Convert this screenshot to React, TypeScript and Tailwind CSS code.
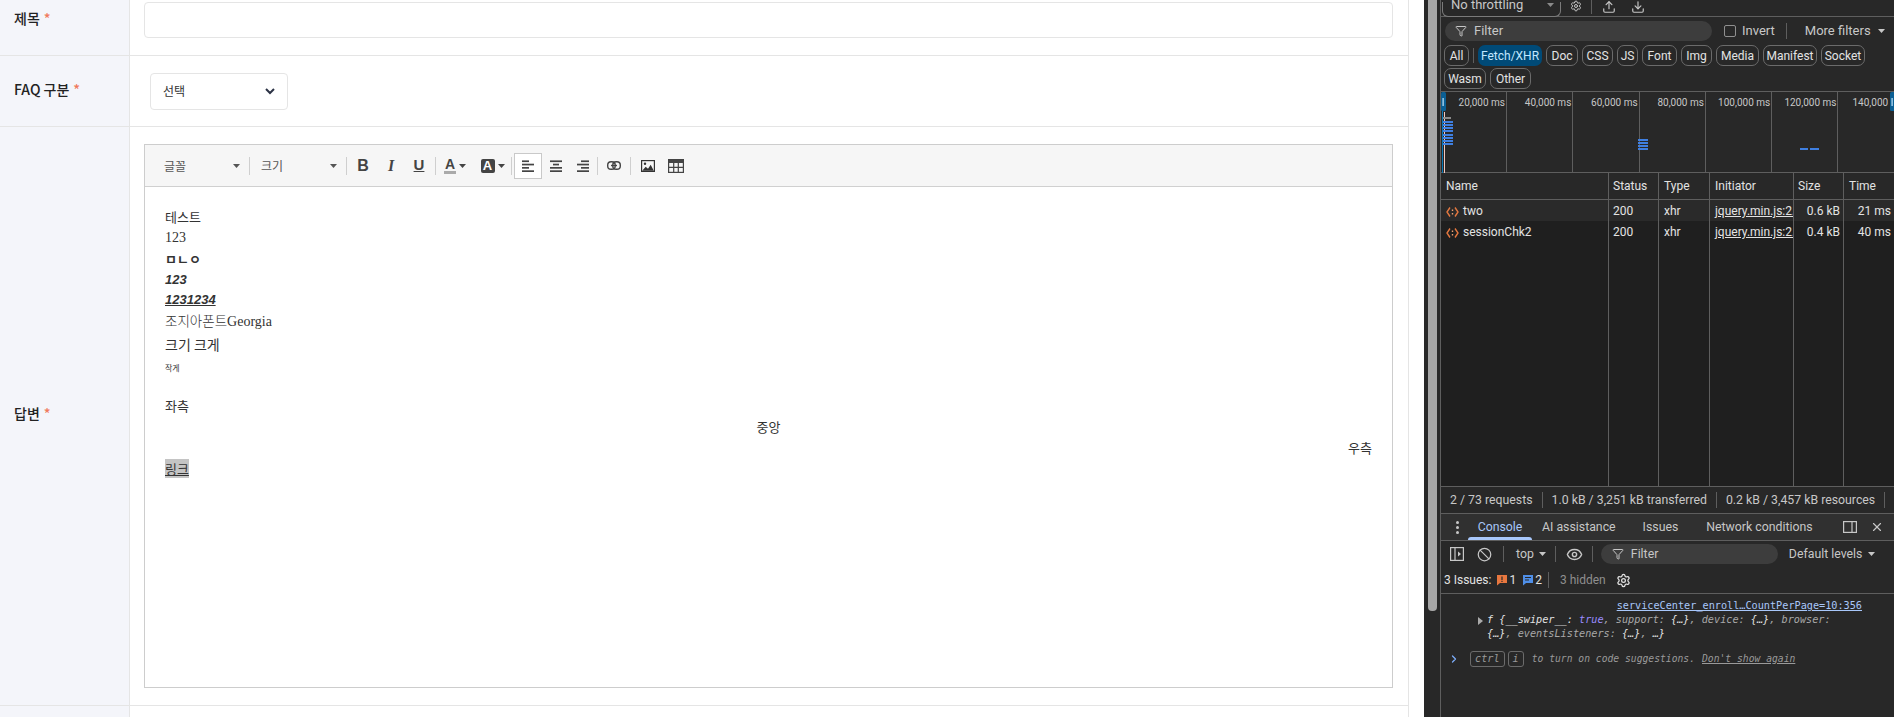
import { Eye, Ban, X, ChevronRight, Settings, Upload, Download, Filter } from 'lucide-react';

const KR = 'font-["Noto_Sans_CJK_KR","Noto_Sans",sans-serif]';

const Required = () => <span className="ml-1 text-[#f0795b]">*</span>;

const Caret = ({ className = '' }: { className?: string }) => (
  <svg width="7" height="4" viewBox="0 0 7 4" className={className}><path d="M0 0h7L3.5 4z" fill="currentColor" /></svg>
);

const Sep = () => <span className="h-[18px] w-px shrink-0 bg-[#cfcfcf]" />;

const AlignIcon = ({ kind }: { kind: 'left' | 'center' | 'right' }) => {
  const rows = kind === 'left'
    ? [[0, 7], [0, 12], [0, 7], [0, 12]]
    : kind === 'center'
      ? [[0, 12], [3, 6], [0, 12], [0, 12]]
      : [[4, 8], [0, 12], [4, 8], [0, 12]];
  return (
    <svg width="12" height="12" viewBox="0 0 12 12" fill="#444">
      {rows.map(([x, w], i) => <rect key={i} x={x} y={i * 3.3 + 0.4} width={w} height="1.7" />)}
    </svg>
  );
};

function Toolbar() {
  return (
    <div className="flex h-[42px] shrink-0 items-center border-b border-[#d0d0d0] bg-[#f6f6f6] pl-[4px] text-[#333]">
      <div className={`flex w-[100px] shrink-0 items-center justify-between pl-[15px] pr-[9px] text-[12px] text-[#555] ${KR}`}>
        <span>글꼴</span><Caret />
      </div>
      <Sep />
      <div className={`flex w-[96px] shrink-0 items-center justify-between pl-[11px] pr-[9px] text-[12px] text-[#555] ${KR}`}>
        <span>크기</span><Caret />
      </div>
      <Sep />
      <div className='ml-[2px] flex w-[86px] shrink-0 items-center font-["Liberation_Sans",sans-serif] text-[16px] text-[#444]'>
        <span className="w-[28px] text-center font-bold">B</span>
        <span className='w-[28px] text-center font-["Liberation_Serif",serif] font-bold italic'>I</span>
        <span className="w-[28px] text-center text-[15px] font-bold underline">U</span>
      </div>
      <Sep />
      <div className='flex w-[38px] shrink-0 items-center justify-center gap-[3px] font-["Liberation_Sans",sans-serif] text-[14px] text-[#444]'>
        <span className="border-b-[3px] border-[#aaa] px-[1px] font-bold leading-[13px]">A</span>
        <Caret />
      </div>
      <div className='flex w-[37px] shrink-0 items-center justify-center gap-[3px] font-["Liberation_Sans",sans-serif] text-[13px]'>
        <span className="flex h-[14px] w-[14px] items-center justify-center rounded-[2px] bg-[#444] font-bold text-white">A</span>
        <Caret className="text-[#444]" />
      </div>
      <Sep />
      <div className="ml-[2px] flex h-[26px] w-[28px] shrink-0 items-center justify-center border border-[#c9c9c9] bg-white"><AlignIcon kind="left" /></div>
      <div className="flex w-[27px] shrink-0 justify-center"><AlignIcon kind="center" /></div>
      <div className="flex w-[28px] shrink-0 justify-center"><AlignIcon kind="right" /></div>
      <Sep />
      <div className="flex w-[32px] shrink-0 justify-center">
        <svg width="14" height="9" viewBox="0 0 14 9" fill="none" stroke="#444" strokeWidth="1.4">
          <rect x="0.7" y="0.7" width="7.5" height="7.6" rx="3.4" />
          <rect x="5.8" y="0.7" width="7.5" height="7.6" rx="3.4" />
          <path d="M4 4.5h6" />
        </svg>
      </div>
      <Sep />
      <div className="flex w-[34px] shrink-0 justify-center">
        <svg width="14" height="12" viewBox="0 0 14 12">
          <rect width="14" height="12" fill="#333" />
          <rect x="1.2" y="1.2" width="11.6" height="9.6" fill="#f6f6f6" />
          <circle cx="4" cy="3.8" r="1.2" fill="#333" />
          <path d="M1.2 10.8l3.5-4 2.3 2 2.7-4 3.1 6z" fill="#333" />
        </svg>
      </div>
      <div className="flex w-[22px] shrink-0 justify-center">
        <svg width="16" height="14" viewBox="0 0 16 14">
          <rect width="16" height="14" fill="#444" />
          <path d="M1.2 4h13.6v8.8H1.2z" fill="#f6f6f6" />
          <path d="M1 8.4h14M5.7 4v9M10.3 4v9" stroke="#444" strokeWidth="1.2" />
        </svg>
      </div>
    </div>
  );
}

function EditorBody() {
  return (
    <div className={`flex-1 pl-[20px] pr-[20px] pt-[19px] text-[13px] leading-[21px] text-[#333] ${KR}`}>
      <p>테스트</p>
      <p className='font-["Liberation_Serif","Noto_Sans_CJK_KR",serif] text-[14px]'>123</p>
      <p className="font-bold">ㅁㄴㅇ</p>
      <p className='font-["Liberation_Sans",sans-serif] font-bold italic'>123</p>
      <p className='font-["Liberation_Sans",sans-serif] leading-[20px] font-bold italic underline'>1231234</p>
      <p className='font-["Liberation_Serif","Noto_Sans_CJK_KR",serif] text-[14px]'>
        <span className='font-["Noto_Sans_CJK_KR"] text-[13.5px] font-light'>조지아폰트</span>Georgia
      </p>
      <p className="text-[14px] leading-[25px]">크기 크게</p>
      <p className="text-[8px] leading-[21px]">작게</p>
      <p className="h-[17px]" />
      <p>좌측</p>
      <p className="text-center">중앙</p>
      <p className="text-right">우측</p>
      <p><span className="bg-[#c4c4c4] underline">링크</span></p>
    </div>
  );
}

function FormPanel() {
  return (
    <div className={`flex w-[1409px] shrink-0 flex-col border-r border-[#e5e5e5] text-[13px] text-[#222] ${KR}`}>
      <div className="flex h-[56px] shrink-0 border-b border-[#e5e5e5]">
        <div className="flex w-[130px] shrink-0 items-start border-r border-[#e5e5e5] bg-[#f4f5fa] pl-[14px] pt-[8px] text-[14px] font-medium">제목<Required /></div>
        <div className="flex-1 pl-[14px] pr-[15px] pt-[2px]">
          <div className="h-[36px] rounded-[4px] border border-[#e5e5e5] bg-white" />
        </div>
      </div>
      <div className="flex h-[71px] shrink-0 border-b border-[#e5e5e5]">
        <div className="flex w-[130px] shrink-0 items-center border-r border-[#e5e5e5] bg-[#f4f5fa] pb-[3px] pl-[14px] text-[14px] font-medium">FAQ 구분<Required /></div>
        <div className="flex flex-1 items-center pl-[20px]">
          <div className="flex h-[37px] w-[138px] items-center justify-between rounded-[4px] border border-[#e5e5e5] bg-white pl-[12px] pr-[12px] text-[12px] text-[#333]">
            <span>선택</span>
            <svg width="10" height="7" viewBox="0 0 10 7" fill="none" stroke="#2c3345" strokeWidth="2"><path d="M1 1l4 4 4-4" /></svg>
          </div>
        </div>
      </div>
      <div className="flex h-[579px] shrink-0 border-b border-[#e5e5e5]">
        <div className="flex w-[130px] shrink-0 items-center border-r border-[#e5e5e5] bg-[#f4f5fa] pb-[5px] pl-[14px] text-[14px] font-medium">답변<Required /></div>
        <div className="flex-1 pb-[17px] pl-[14px] pr-[15px] pt-[17px]">
          <div className="flex h-full flex-col border border-[#cdcdcd]">
            <Toolbar />
            <EditorBody />
          </div>
        </div>
      </div>
      <div className="flex flex-1">
        <div className="w-[130px] shrink-0 border-r border-[#e5e5e5] bg-[#f4f5fa]" />
      </div>
    </div>
  );
}

const Chip = ({ label, width, active }: { label: string; width: string; active?: boolean }) => (
  <span className={`${width} flex h-[21px] items-center justify-center rounded-[7px] ${active ? 'bg-[#004a77] text-[#c2e7ff]' : 'border border-[#6b6b6b]'}`}>{label}</span>
);

const overviewLabels = ['20,000 ms', '40,000 ms', '60,000 ms', '80,000 ms', '100,000 ms', '120,000 ms', '140,000'];

function Overview() {
  return (
    <div className="relative flex h-[81px] shrink-0 border-b border-[#5e5e5e] text-[10px] text-[#c7c7c7]">
      {overviewLabels.map((l, i) => (
        <div key={l} className={i === 0 ? 'w-[66px] shrink-0 border-r border-[#5e5e5e] pr-px pt-[3px] text-right leading-[16px]' : i === 6 ? 'flex-1 overflow-hidden whitespace-nowrap pl-[14px] pt-[3px] leading-[16px]' : 'w-[66.3px] shrink-0 border-r border-[#5e5e5e] pr-px pt-[3px] text-right leading-[16px]'}>{l}</div>
      ))}
      <svg className="absolute left-0 top-0" width="454" height="81" viewBox="0 0 454 81">
        <rect x="0" y="0" width="5" height="19" rx="1.5" fill="#0b5f94" />
        <rect x="1.5" y="6" width="1.2" height="8" fill="#c2e7ff" />
        <rect x="449" y="0" width="5" height="19" rx="1.5" fill="#0b5f94" />
        <rect x="450.5" y="6" width="1.2" height="8" fill="#c2e7ff" />
        <rect x="1" y="19" width="1" height="62" fill="#0b7ab8" />
        <rect x="3" y="20" width="1" height="61" fill="#f3c9c0" />
        <rect x="2" y="25" width="8" height="2" fill="#8a8a8a" />
        {[29, 32, 35, 38, 42, 45, 48, 51].map((y) => <rect key={y} x="2" y={y} width="10" height="2" fill="#3f7fe0" />)}
        {[47, 50, 53, 56].map((y) => <rect key={y} x="197" y={y} width="10" height="2" fill="#3f7fe0" />)}
        <rect x="359" y="56" width="8" height="2" fill="#3f7fe0" />
        <rect x="369" y="56" width="9" height="2" fill="#3f7fe0" />
      </svg>
    </div>
  );
}

const XhrIcon = () => (
  <svg width="13" height="12" viewBox="0 0 13 12" fill="none" stroke="#e3773f" strokeWidth="1.4">
    <path d="M4 1.5L1 6l3 4.5M9 1.5L12 6l-3 4.5" />
    <path d="M6.5 3.5v1.5M6.5 7v1.5" stroke="#f0a070" />
  </svg>
);

const colWidths = 'grid grid-cols-[168px_50px_51px_84px_50px_1fr]';

const RequestRow = ({ name, size, time, light }: { name: string; size: string; time: string; light?: boolean }) => (
  <div className={`${colWidths} h-[21px] items-center pt-[2px] leading-[19px] ${light ? 'bg-[#2a2a2a]' : ''}`}>
    <span className="flex items-center gap-[4px] pl-[5px]"><XhrIcon />{name}</span>
    <span className="pl-[4px]">200</span>
    <span className="pl-[5px]">xhr</span>
    <span className="overflow-hidden whitespace-nowrap pl-[5px] underline">jquery.min.js:2.</span>
    <span className="pr-[4px] text-right">{size}</span>
    <span className="pr-[3px] text-right">{time}</span>
  </div>
);

function RequestTable() {
  return (
    <div className="relative flex h-[314px] shrink-0 flex-col border-b border-[#5e5e5e] bg-[#1f1f1f]">
      <div className={`${colWidths} h-[27px] shrink-0 items-center border-b border-[#5e5e5e] bg-[#282828]`}>
        <span className="pl-[5px]">Name</span>
        <span className="pl-[4px]">Status</span>
        <span className="pl-[5px]">Type</span>
        <span className="pl-[5px]">Initiator</span>
        <span className="pl-[4px]">Size</span>
        <span className="pl-[5px]">Time</span>
      </div>
      <RequestRow name="two" size="0.6 kB" time="21 ms" light />
      <RequestRow name="sessionChk2" size="0.4 kB" time="40 ms" />
      <div className={`${colWidths} pointer-events-none absolute inset-0`}>
        {[0, 1, 2, 3, 4].map((i) => <span key={i} className="border-r border-[#5e5e5e]" />)}
      </div>
    </div>
  );
}

function Console() {
  return (
    <div className='flex-1 pl-[9px] pt-[5px] font-["DejaVu_Sans_Mono",monospace] text-[10.2px] leading-[14px]'>
      <div className="pr-[32px] text-right text-[#a8c7fa] underline">serviceCenter_enroll…CountPerPage=10:356</div>
      <div className="relative pl-[37px] italic leading-[14px] text-[#a9a9a9]">
        <span className="absolute left-[28px] top-[4px] h-0 w-0 border-y-[4px] border-l-[5px] border-y-transparent border-l-[#aaa]" />
        <span className="text-[#e3e3e3]">f {'{'}__swiper__:</span> <span className="text-[#9a8cff]">true</span>, support: <span className="text-[#e3e3e3]">{'{'}…{'}'}</span>, device: <span className="text-[#e3e3e3]">{'{'}…{'}'}</span>, browser:
        <br />
        <span className="text-[#e3e3e3]">{'{'}…{'}'}</span>, eventsListeners: <span className="text-[#e3e3e3]">{'{'}…{'}'}</span>, <span className="text-[#e3e3e3]">…{'}'}</span>
      </div>
      <div className="mt-[10px] flex items-center text-[9.7px] italic text-[#9a9a9a]">
        <ChevronRight size={12} className="-ml-[2px] mr-[10px] text-[#7cacf8]" strokeWidth={2.5} />
        <span className="rounded-[3px] border border-[#6b6b6b] px-[4px] text-[10.2px] leading-[14px]">ctrl</span>
        <span className="ml-[3px] rounded-[3px] border border-[#6b6b6b] px-[4px] text-[10.2px] leading-[14px]">i</span>
        <span className="ml-[8px]">to turn on code suggestions.</span>
        <span className="ml-[7px] underline">Don't show again</span>
      </div>
    </div>
  );
}

function DevTools() {
  return (
    <div className='flex h-[717px] w-[454px] shrink-0 flex-col overflow-hidden border-l border-[#5e5e5e] bg-[#282828] font-["Roboto",sans-serif] text-[12px] text-[#e3e3e3]'>
      <div className="flex h-[17px] shrink-0 items-end border-b border-[#5e5e5e] pl-[1px] text-[#c7c7c7]">
        <div className="-mb-px flex h-[15px] w-[119px] shrink-0 items-end justify-between rounded-b-[6px] border border-t-0 border-[#7a7a7a] pb-[4px] pl-[8px] pr-[6px] text-[13px] leading-[14px]">
          <span>No throttling</span><Caret className="mb-[5px] text-[#8a8a8a]" />
        </div>
        <Settings size={12} className="mb-[4px] ml-[9px]" />
        <span className="mb-[2px] ml-[9px] h-[14px] w-px bg-[#5e5e5e]" />
        <Upload size={14} className="mb-[2px] ml-[10px]" />
        <Download size={14} className="mb-[2px] ml-[15px]" />
      </div>
      <div className="flex h-[27px] shrink-0 items-center pl-[4px] text-[#c7c7c7]">
        <div className="flex h-[20px] w-[267px] shrink-0 items-center gap-[7px] rounded-full bg-[#3d3d3d] pl-[10px] text-[13px]">
          <Filter size={12} /><span>Filter</span>
        </div>
        <span className="ml-[12px] h-[12px] w-[12px] rounded-[2px] border border-[#8f8f8f]" />
        <span className="ml-[6px] text-[13px]">Invert</span>
        <span className="ml-[11px] h-[16px] w-px bg-[#5e5e5e]" />
        <span className="ml-[18px] text-[13px]">More filters</span>
        <Caret className="ml-[7px]" />
      </div>
      <div className="flex shrink-0 flex-wrap gap-x-[4px] gap-y-[2px] border-b border-[#5e5e5e] pb-[2px] pl-[3px] pr-[10px] pt-[1px] text-[12px]">
        <Chip label="All" width="w-[25px]" />
        <span className="my-[3px] w-px bg-[#5e5e5e]" />
        <Chip label="Fetch/XHR" width="w-[64px]" active />
        <Chip label="Doc" width="w-[32px]" />
        <Chip label="CSS" width="w-[31px]" />
        <Chip label="JS" width="w-[21px]" />
        <Chip label="Font" width="w-[35px]" />
        <Chip label="Img" width="w-[31px]" />
        <Chip label="Media" width="w-[43px]" />
        <Chip label="Manifest" width="w-[54px]" />
        <Chip label="Socket" width="w-[44px]" />
        <Chip label="Wasm" width="w-[42px]" />
        <Chip label="Other" width="w-[41px]" />
      </div>
      <Overview />
      <RequestTable />
      <div className="flex h-[27px] shrink-0 items-center border-b border-[#5e5e5e] pl-[9px] text-[12.3px] text-[#c7c7c7]">
        <span>2 / 73 requests</span>
        <span className="mx-[9px] h-[16px] w-px bg-[#5e5e5e]" />
        <span>1.0 kB / 3,251 kB transferred</span>
        <span className="mx-[9px] h-[16px] w-px bg-[#5e5e5e]" />
        <span>0.2 kB / 3,457 kB resources</span>
        <span className="ml-[9px] h-[16px] w-px bg-[#5e5e5e]" />
      </div>
      <div className="flex h-[27px] shrink-0 items-center whitespace-nowrap border-b border-[#5e5e5e] bg-[#303030] text-[12.3px] text-[#c7c7c7]">
        <span className="ml-[15px] flex w-[3px] flex-col gap-[2px]">
          <i className="h-[3px] w-[3px] rounded-full bg-[#c7c7c7]" /><i className="h-[3px] w-[3px] rounded-full bg-[#c7c7c7]" /><i className="h-[3px] w-[3px] rounded-full bg-[#c7c7c7]" />
        </span>
        <span className="relative ml-[9px] flex h-[26px] w-[64px] items-center justify-center text-[#a8c7fa]">
          Console
          <span className="absolute bottom-0 left-0 h-[3px] w-full rounded-t-[3px] bg-[#a8c7fa]" />
        </span>
        <span className="ml-[10px]">AI assistance</span>
        <span className="ml-[27px]">Issues</span>
        <span className="ml-[28px]">Network conditions</span>
        <svg width="14" height="12" viewBox="0 0 14 12" fill="none" stroke="#c7c7c7" strokeWidth="1.2" className="ml-[30px] shrink-0"><rect x="0.6" y="0.6" width="12.8" height="10.8" /><path d="M9 1v10" /></svg>
        <X size={14} className="ml-[13px] shrink-0" />
      </div>
      <div className="flex h-[26px] shrink-0 items-center text-[12.3px] text-[#c7c7c7]">
        <svg width="14" height="14" viewBox="0 0 14 14" fill="none" stroke="#c7c7c7" strokeWidth="1.2" className="ml-[9px]"><rect x="0.6" y="0.6" width="12.8" height="12.8" /><path d="M5 1v12" /><path d="M8 4.5l3 2.5-3 2.5z" fill="#c7c7c7" stroke="none" /></svg>
        <Ban size={15} className="ml-[13px]" />
        <span className="ml-[11px] h-[16px] w-px bg-[#5e5e5e]" />
        <span className="ml-[12px]">top</span>
        <Caret className="ml-[5px]" />
        <span className="ml-[9px] h-[16px] w-px bg-[#5e5e5e]" />
        <Eye size={17} className="ml-[10px]" />
        <span className="ml-[9px] h-[16px] w-px bg-[#5e5e5e]" />
        <div className="ml-[8px] flex h-[20px] w-[177px] items-center gap-[7px] rounded-full bg-[#3d3d3d] pl-[11px]"><Filter size={12} /><span>Filter</span></div>
        <span className="ml-[11px]">Default levels</span>
        <Caret className="ml-[6px]" />
      </div>
      <div className="flex h-[27px] shrink-0 items-center border-b border-[#5e5e5e] pl-[3px] text-[12px]">
        <span>3 Issues:</span>
        <svg width="12" height="12" viewBox="0 0 12 12" className="ml-[5px]"><path d="M1 1h10v8H4l-3 2.5z" fill="#e8773f" /><rect x="5.4" y="2.5" width="1.2" height="3.5" fill="#282828" /><rect x="5.4" y="6.8" width="1.2" height="1.2" fill="#282828" /></svg>
        <span className="ml-[1px]">1</span>
        <svg width="12" height="12" viewBox="0 0 12 12" className="ml-[6px]"><path d="M1 1h10v8H4l-3 2.5z" fill="#4f8fe8" /><path d="M3 3.5h6M3 6h4" stroke="#282828" /></svg>
        <span className="ml-[1px]">2</span>
        <span className="ml-[6px] h-[16px] w-px bg-[#5e5e5e]" />
        <span className="ml-[11px] text-[#8f8f8f]">3 hidden</span>
        <Settings size={15} className="ml-[10px]" />
      </div>
      <Console />
    </div>
  );
}

export default function App() {
  return (
    <div className="flex h-[717px] w-[1894px] overflow-hidden bg-white">
      <FormPanel />
      <div className="w-[15px] shrink-0 bg-white" />
      <div className="flex w-[16px] shrink-0 justify-center bg-[#282828]">
        <div className="h-[611px] w-[9px] rounded-b-[4px] bg-[#a6a6a6]" />
      </div>
      <DevTools />
    </div>
  );
}
